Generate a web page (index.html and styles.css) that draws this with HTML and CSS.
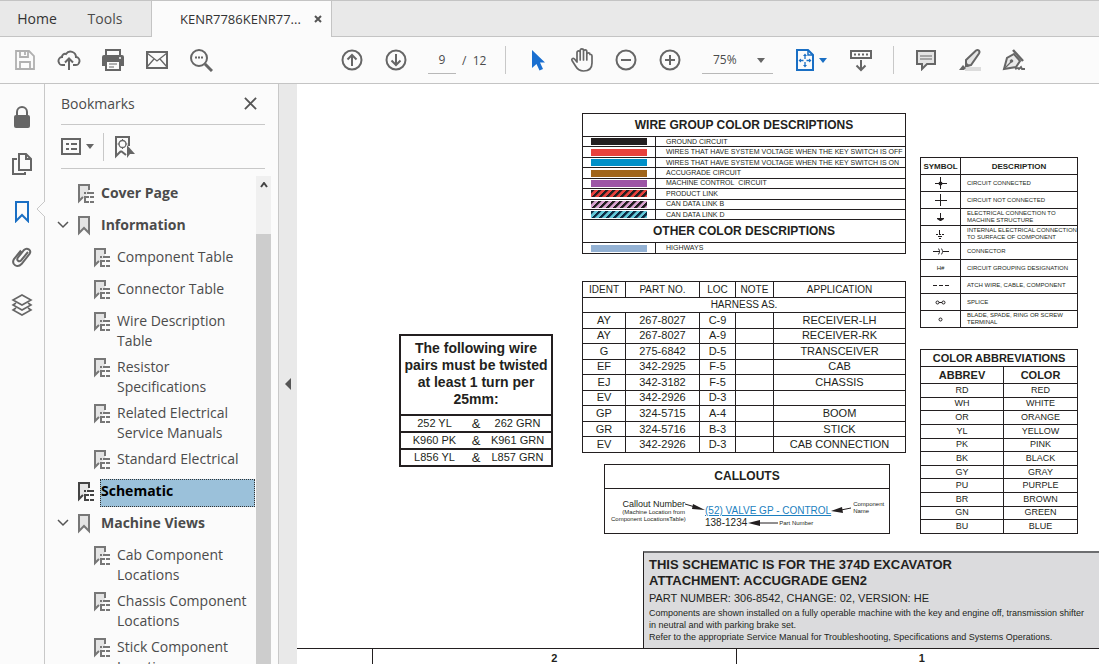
FILE: index.html
```html
<!DOCTYPE html>
<html lang="en">
<head>
  <meta charset="UTF-8">
  <meta name="viewport" content="width=device-width, initial-scale=1.0">
  <title>KENR7786KENR7786</title>
  <link rel="stylesheet" href="styles.css">
</head>
<body>

<!-- shared icons -->
<svg class="defs" aria-hidden="true">
  <symbol id="bm-tree" viewBox="0 0 16 20">
    <path d="M1 1h10v8l-5 4-5 5z" fill="#e4e4e4"/>
    <path d="M11 6V1H1v16l4-4" fill="none" stroke="currentColor" stroke-width="2"/>
    <path d="M6 9h2M9 9h7M7 12v6h4M7 13h4M12 13h4M12 18h4" fill="none" stroke="currentColor" stroke-width="2"/>
  </symbol>
  <symbol id="bm" viewBox="0 0 16 20">
    <path d="M1 1h10v16l-5-5-5 5z" fill="#e4e4e4" stroke="currentColor" stroke-width="2"/>
  </symbol>
  <symbol id="chev" viewBox="0 0 12 8">
    <path d="M1 1l5 5 5-5" fill="none" stroke="currentColor" stroke-width="1.5"/>
  </symbol>
  <symbol id="caret" viewBox="0 0 8 5">
    <path d="M0 0h8L4 5z" fill="currentColor"/>
  </symbol>
</svg>

<header class="tabs">
  <button type="button" class="tab home">Home</button>
  <button type="button" class="tab tools">Tools</button>
  <div class="tab-doc">
    <span>KENR7786KENR77...</span>
    <button type="button" class="tab-close" aria-label="Close tab">
      <svg width="8" height="8" viewBox="0 0 8 8"><path d="M1 1l6 6M7 1L1 7" stroke="#555" stroke-width="2"/></svg>
    </button>
  </div>
</header>

<div class="toolbar">
  <div class="group">
    <button type="button" class="tool off" aria-label="Save">
      <svg width="22" height="22" viewBox="0 0 22 22" fill="none" stroke="currentColor" stroke-width="1.8"><path d="M2 2h13l5 5v13H2z"/><path d="M6 2v6h8V2M6 20v-7h10v7M11 3v3"/></svg>
    </button>
    <button type="button" class="tool" aria-label="Upload">
      <svg width="24" height="24" viewBox="0 0 24 24" fill="none" stroke="currentColor" stroke-width="2"><path d="M8 17H6a4 4 0 0 1-1-8 3 3 0 0 1 4-3 5.500 5.500 0 0 1 10 3 4 4 0 0 1-1 8h-2"/><path d="M12 22V11M8 14.500l4-4 4 4"/></svg>
    </button>
    <button type="button" class="tool" aria-label="Print">
      <svg width="24" height="24" viewBox="0 0 24 24"><path d="M5 7V2h14v5" fill="none" stroke="currentColor" stroke-width="2"/><path d="M3 7h18a2 2 0 0 1 2 2v9h-4v-4H5v4H1V9a2 2 0 0 1 2-2z" fill="currentColor"/><path d="M5 14v8h14v-8" fill="none" stroke="currentColor" stroke-width="2"/><path d="M8 16h8M8 19h5" stroke="currentColor"/><path d="M18 10h2" stroke="#fff" stroke-width="1.500"/></svg>
    </button>
    <button type="button" class="tool" aria-label="Email">
      <svg width="24" height="20" viewBox="0 0 24 20" fill="none" stroke="currentColor"><path d="M2 2h20v16H2z" stroke-width="2"/><path d="M2 3l10 8 10-8M2 17l7-8M22 17l-7-8" stroke-width="1.300"/></svg>
    </button>
    <button type="button" class="tool" aria-label="Find">
      <svg width="24" height="24" viewBox="0 0 24 24" fill="none" stroke="currentColor"><circle cx="10" cy="10" r="8" stroke-width="2"/><path d="M16 16l7 7" stroke-width="3"/><path d="M6 9.500h2M9 9.500h2M12 9.500h2" stroke-width="2"/></svg>
    </button>
  </div>

  <div class="group pager">
    <button type="button" class="tool" aria-label="Previous page">
      <svg width="22" height="22" viewBox="0 0 22 22" fill="none" stroke="currentColor" stroke-width="2"><circle cx="11" cy="11" r="9.500"/><path d="M11 17V6M6.500 10.500L11 6l4.500 4.500"/></svg>
    </button>
    <button type="button" class="tool" aria-label="Next page">
      <svg width="22" height="22" viewBox="0 0 22 22" fill="none" stroke="currentColor" stroke-width="2"><circle cx="11" cy="11" r="9.500"/><path d="M11 5v11M6.500 11.500L11 16l4.500-4.500"/></svg>
    </button>
    <input type="text" class="page-input" value="9" aria-label="Page number">
    <span class="page-total">/&nbsp; 12</span>
  </div>
  <div class="sep"></div>

  <div class="group">
    <button type="button" class="tool" aria-label="Select">
      <svg width="22" height="24" viewBox="0 0 22 24"><path d="M5 2v18l4.500-4 3 6.500 3.500-1.500-3-6.500h5z" fill="#1a6fd0"/></svg>
    </button>
    <button type="button" class="tool" aria-label="Pan">
      <svg width="24" height="26" viewBox="0 0 24 26" fill="none" stroke="currentColor" stroke-width="1.700" stroke-linejoin="round"><path d="M7 15V5.500a1.600 1.600 0 0 1 3.200 0V13 3.500a1.600 1.600 0 0 1 3.300 0V13 4.500a1.600 1.600 0 0 1 3.300 0V13 7.500a1.600 1.600 0 0 1 3.200 0C20 7.500 22 7 22 9v7c0 5-3 8-8.500 8-4 0-6-1.500-8-5l-3.500-5.500c-.8-1.700 1-2.700 2.300-1.700z"/></svg>
    </button>
    <button type="button" class="tool" aria-label="Zoom out">
      <svg width="22" height="22" viewBox="0 0 22 22" fill="none" stroke="currentColor" stroke-width="2"><circle cx="11" cy="11" r="9.500"/><path d="M6 11h10"/></svg>
    </button>
    <button type="button" class="tool" aria-label="Zoom in">
      <svg width="22" height="22" viewBox="0 0 22 22" fill="none" stroke="currentColor" stroke-width="2"><circle cx="11" cy="11" r="9.500"/><path d="M6 11h10M11 6v10"/></svg>
    </button>
    <div class="zoom-box">
      <select class="zoom-select" aria-label="Zoom level"><option>75%</option></select>
      <svg class="zoom-caret" width="8" height="5"><use href="#caret"/></svg>
    </div>
    <button type="button" class="tool fit" aria-label="Fit page">
      <svg width="18" height="22" viewBox="0 0 18 22" fill="none" stroke="currentColor"><path d="M1 1h11l5 5v15H1z" stroke-width="2"/><path d="M12 1v5h5" stroke-width="1.500"/><path d="M9 6v4M9 13v4M3.500 11.500h4M10.500 11.500h4" stroke-width="1.300"/><path d="M9 4.500l2 2.500H7zM9 18.500L7 16h4zM2.500 11.500L5 9.500v4zM15.500 11.500L13 9.500v4z" fill="currentColor" stroke="none"/></svg>
      <svg width="8" height="5"><use href="#caret"/></svg>
    </button>
    <button type="button" class="tool" aria-label="Page scrolling">
      <svg width="24" height="24" viewBox="0 0 24 24" fill="none" stroke="currentColor" stroke-width="2"><path d="M2 3h20v7H2z"/><path d="M5 6.500h2M9 6.500h2M13 6.500h2M17 6.500h2M12 12v10M7.500 17.500L12 22l4.500-4.500"/></svg>
    </button>
  </div>
  <div class="sep"></div>

  <div class="group">
    <button type="button" class="tool" aria-label="Comment">
      <svg width="22" height="22" viewBox="0 0 22 22" stroke="currentColor"><path d="M2 2h18v13h-8l-5 5v-5H2z" fill="#e4e4e4" stroke-width="2"/><path d="M5 7h12M5 10h12"/></svg>
    </button>
    <button type="button" class="tool" aria-label="Highlight">
      <svg width="24" height="24" viewBox="0 0 24 24"><path d="M7 19h16v4H7z" fill="#dcdcdc"/><path d="M8 12L18 2.500c2-1.500 4.500.5 3 3L13 17l-5 1z" fill="#e4e4e4" stroke="currentColor" stroke-width="2"/><path d="M7 13l5 5-3 1-2-2zM5 17l3 3-2 2H1z" fill="currentColor"/></svg>
    </button>
    <button type="button" class="tool" aria-label="Sign">
      <svg width="24" height="24" viewBox="0 0 24 24" fill="none" stroke="currentColor"><path d="M2 21L5 10l7-4 6 7-4 6z" fill="#e9e9e9" stroke-width="2"/><path d="M11 2l10 11" stroke-width="2.500"/><path d="M2 21l7-7" stroke-width="1.300"/><circle cx="9.500" cy="13" r="1.300" fill="currentColor"/><path d="M13 21l3-1 1 1 2-2 1 2h3" stroke-width="1.800"/></svg>
    </button>
  </div>
</div>

<div class="main">
  <nav class="rail">
    <button type="button" aria-label="Security">
      <svg width="18" height="24" viewBox="0 0 18 24"><path d="M4 11V7a5 5 0 0 1 10 0v4" fill="none" stroke="currentColor" stroke-width="2"/><rect x="1" y="10" width="16" height="13" rx="2" fill="currentColor"/></svg>
    </button>
    <button type="button" aria-label="Pages">
      <svg width="20" height="24" viewBox="0 0 20 24" fill="none" stroke="currentColor" stroke-width="2"><path d="M7 2h7l5 5v11H7z"/><path d="M14 2v5h5M5 7H1v15h12v-2"/></svg>
    </button>
    <button type="button" class="on" aria-label="Bookmarks">
      <svg width="16" height="24" viewBox="0 0 16 24" fill="none" stroke="currentColor" stroke-width="2"><path d="M2 3h12v19l-6-6-6 6z"/></svg>
      <svg class="notch" width="9" height="16" viewBox="0 0 9 16"><path d="M9 0L1 8l8 8" fill="#fbfbfb" stroke="#c8c8c8"/></svg>
    </button>
    <button type="button" aria-label="Attachments">
      <svg width="22" height="24" viewBox="0 0 22 24" fill="none" stroke="currentColor" stroke-width="2"><path d="M17 6l-7 8.500c-2 2-5-.5-3-3L13 4c3-3 8 0 5.500 4l-8 10c-4 4.500-10.500.5-7.500-5L10 4.500"/></svg>
    </button>
    <button type="button" aria-label="Layers">
      <svg width="22" height="24" viewBox="0 0 22 24" fill="none" stroke="currentColor" stroke-width="1.600"><path d="M11 2l9 5-9 5-9-5z"/><path d="M5 10l-3 2 9 5 9-5-3-2M5 15l-3 2 9 5 9-5-3-2"/></svg>
    </button>
  </nav>

  <aside class="panel">
    <div class="panel-head">
      <h2>Bookmarks</h2>
      <button type="button" aria-label="Close panel">
        <svg width="13" height="13" viewBox="0 0 14 14"><path d="M1 1l12 12M13 1L1 13" stroke="#555" stroke-width="2"/></svg>
      </button>
    </div>
    <div class="panel-tools">
      <button type="button" class="opts" aria-label="Options">
        <svg width="20" height="18" viewBox="0 0 20 18" fill="none" stroke="currentColor" stroke-width="2"><path d="M1 1h18v15H1z"/><path d="M5 6h3M10 6h6M5 11h3M10 11h6"/></svg>
        <svg width="8" height="5"><use href="#caret"/></svg>
      </button>
      <button type="button" class="find" aria-label="Find current bookmark">
        <svg width="22" height="24" viewBox="0 0 22 24" fill="none" stroke="currentColor"><path d="M16 11V2H3v19l5-5" stroke-width="2"/><circle cx="9.500" cy="9" r="3.500" stroke-width="1.300"/><path d="M9.500 4v2M9.500 12v2M4.500 9h2M12.500 9h2"/><path d="M14 10v13l3-4h5z" fill="currentColor" stroke="none"/><path d="M8 16l5 4" stroke-width="2"/></svg>
      </button>
    </div>
    <div class="list-wrap">
      <ul class="bookmarks">
        <li><span class="tw"></span><svg class="ic"><use href="#bm-tree"/></svg><a href="#">Cover Page</a></li>
        <li><svg class="tw"><use href="#chev"/></svg><svg class="ic"><use href="#bm"/></svg><a href="#">Information</a></li>
        <li class="sub"><svg class="ic"><use href="#bm-tree"/></svg><a href="#">Component Table</a></li>
        <li class="sub"><svg class="ic"><use href="#bm-tree"/></svg><a href="#">Connector Table</a></li>
        <li class="sub"><svg class="ic"><use href="#bm-tree"/></svg><a href="#">Wire Description Table</a></li>
        <li class="sub"><svg class="ic"><use href="#bm-tree"/></svg><a href="#">Resistor Specifications</a></li>
        <li class="sub"><svg class="ic"><use href="#bm-tree"/></svg><a href="#">Related Electrical Service Manuals</a></li>
        <li class="sub"><svg class="ic"><use href="#bm-tree"/></svg><a href="#">Standard Electrical</a></li>
        <li class="selected"><span class="tw"></span><svg class="ic"><use href="#bm-tree"/></svg><a href="#">Schematic</a></li>
        <li><svg class="tw"><use href="#chev"/></svg><svg class="ic"><use href="#bm"/></svg><a href="#">Machine Views</a></li>
        <li class="sub"><svg class="ic"><use href="#bm-tree"/></svg><a href="#">Cab Component Locations</a></li>
        <li class="sub"><svg class="ic"><use href="#bm-tree"/></svg><a href="#">Chassis Component Locations</a></li>
        <li class="sub"><svg class="ic"><use href="#bm-tree"/></svg><a href="#">Stick Component Locations</a></li>
      </ul>
      <div class="scroll">
        <svg width="8" height="6" viewBox="0 0 8 6"><path d="M1 5l3-4 3 4" fill="none" stroke="#444" stroke-width="2"/></svg>
        <div class="thumb"></div>
      </div>
    </div>
  </aside>

  <button type="button" class="splitter" aria-label="Collapse panel">
    <svg width="6" height="12" viewBox="0 0 6 12"><path d="M6 0v12L0 6z" fill="#555"/></svg>
  </button>

  <main class="sheet">
    <div class="tables">
      <div class="col-pairs">
        <table class="pairs">
          <colgroup><col><col class="w-amp"><col></colgroup>
          <thead>
            <tr><th colspan="3">The following wire pairs must be twisted at least 1 turn per 25mm:</th></tr>
          </thead>
          <tbody>
            <tr><td>252 YL</td><td class="amp">&amp;</td><td>262 GRN</td></tr>
            <tr><td>K960 PK</td><td class="amp">&amp;</td><td>K961 GRN</td></tr>
            <tr><td>L856 YL</td><td class="amp">&amp;</td><td>L857 GRN</td></tr>
          </tbody>
        </table>
      </div>

      <div class="col-mid">
        <table class="wires">
          <colgroup><col class="w-swatch"><col></colgroup>
          <tr class="title"><th colspan="2">WIRE GROUP COLOR DESCRIPTIONS</th></tr>
          <tr><td><div class="swatch black"></div></td><td>GROUND CIRCUIT</td></tr>
          <tr><td><div class="swatch red"></div></td><td>WIRES THAT HAVE SYSTEM VOLTAGE WHEN THE KEY SWITCH IS OFF</td></tr>
          <tr><td><div class="swatch blue"></div></td><td>WIRES THAT HAVE SYSTEM VOLTAGE WHEN THE KEY SWITCH IS ON</td></tr>
          <tr><td><div class="swatch brown"></div></td><td>ACCUGRADE CIRCUIT</td></tr>
          <tr><td><div class="swatch purple"></div></td><td>MACHINE CONTROL&nbsp; CIRCUIT</td></tr>
          <tr><td><div class="swatch stripe-red"></div></td><td>PRODUCT LINK</td></tr>
          <tr><td><div class="swatch stripe-pink"></div></td><td>CAN DATA LINK B</td></tr>
          <tr><td><div class="swatch stripe-cyan"></div></td><td>CAN DATA LINK D</td></tr>
          <tr class="title"><th colspan="2">OTHER COLOR DESCRIPTIONS</th></tr>
          <tr><td><div class="swatch steel"></div></td><td>HIGHWAYS</td></tr>
        </table>

        <table class="harness">
          <colgroup><col class="w-ident"><col class="w-part"><col class="w-loc"><col class="w-note"><col></colgroup>
          <tr><th>IDENT</th><th>PART NO.</th><th>LOC</th><th>NOTE</th><th>APPLICATION</th></tr>
          <tr><th colspan="5">HARNESS AS.</th></tr>
          <tr><td>AY</td><td>267-8027</td><td>C-9</td><td></td><td>RECEIVER-LH</td></tr>
          <tr><td>AY</td><td>267-8027</td><td>A-9</td><td></td><td>RECEIVER-RK</td></tr>
          <tr><td>G</td><td>275-6842</td><td>D-5</td><td></td><td>TRANSCEIVER</td></tr>
          <tr><td>EF</td><td>342-2925</td><td>F-5</td><td></td><td>CAB</td></tr>
          <tr><td>EJ</td><td>342-3182</td><td>F-5</td><td></td><td>CHASSIS</td></tr>
          <tr><td>EV</td><td>342-2926</td><td>D-3</td><td></td><td></td></tr>
          <tr><td>GP</td><td>324-5715</td><td>A-4</td><td></td><td>BOOM</td></tr>
          <tr><td>GR</td><td>324-5716</td><td>B-3</td><td></td><td>STICK</td></tr>
          <tr><td>EV</td><td>342-2926</td><td>D-3</td><td></td><td>CAB CONNECTION</td></tr>
        </table>

        <section class="callouts">
          <h3>CALLOUTS</h3>
          <div class="callout-body">
            <div class="callout-num">
              <p>Callout Number</p>
              <small>(Machine Location from<br>Component LocationsTable)</small>
            </div>
            <svg class="arrow-in" width="20" height="12" viewBox="0 0 20 12"><path d="M0 3l10 3" stroke="#231f20"/><path d="M8 3l12 6L7 8z" fill="#231f20"/></svg>
            <div class="callout-main">
              <a href="#">(52) VALVE GP - CONTROL</a>
              <div class="part-row">
                <span>138-1234</span>
                <svg width="30" height="6" viewBox="0 0 30 6"><path d="M10 3h20" stroke="#231f20"/><path d="M0 3l12-3v6z" fill="#231f20"/></svg>
                <small>Part Number</small>
              </div>
            </div>
            <svg class="arrow-out" width="20" height="8" viewBox="0 0 20 8"><path d="M10 4l10-2" stroke="#231f20"/><path d="M0 5l11-4 1 6z" fill="#231f20"/></svg>
            <small class="callout-name">Component<br>Name</small>
          </div>
        </section>
      </div>

      <div class="col-right">
        <table class="symbols">
          <colgroup><col class="w-symbol"><col></colgroup>
          <tr><th>SYMBOL</th><th>DESCRIPTION</th></tr>
          <tr><td><svg width="12" height="12" viewBox="0 0 12 12"><path d="M0 6.500h12M5.500 0v12" stroke="#231f20"/><circle cx="5.500" cy="6.500" r="2" fill="#231f20"/></svg></td><td>CIRCUIT CONNECTED</td></tr>
          <tr><td><svg width="12" height="12" viewBox="0 0 12 12"><path d="M0 6.500h12M5.500 0v12" stroke="#231f20"/></svg></td><td>CIRCUIT NOT CONNECTED</td></tr>
          <tr><td><svg width="8" height="9" viewBox="0 0 8 9"><path d="M3.500 0v6" stroke="#231f20"/><path d="M0 5h7v1L4 8H3L0 6z" fill="#231f20"/></svg></td><td>ELECTRICAL CONNECTION TO MACHINE STRUCTURE</td></tr>
          <tr><td><svg width="9" height="9" viewBox="0 0 9 9"><path d="M3.500 0v5M0 4.500h2M3 4.500h2M6 4.500h2M2 6.500h4M3 8.500h2" stroke="#231f20"/></svg></td><td>INTERNAL ELECTRICAL CONNECTION TO SURFACE OF COMPONENT</td></tr>
          <tr><td><svg width="16" height="7" viewBox="0 0 16 7" fill="none" stroke="#231f20"><path d="M0 3.500h7M10 3.500h6M5 .5c2 1 2 5 0 6M8 .5c2 1 2 5 0 6"/></svg></td><td>CONNECTOR</td></tr>
          <tr><td class="hash">H#</td><td>CIRCUIT GROUPING DESIGNATION</td></tr>
          <tr><td><svg width="16" height="3" viewBox="0 0 16 3"><path d="M0 1.500h4M6 1.500h4M12 1.500h4" stroke="#231f20"/></svg></td><td>ATCH WIRE, CABLE, COMPONENT</td></tr>
          <tr><td><svg width="11" height="5" viewBox="0 0 11 5" fill="none" stroke="#231f20"><circle cx="2.500" cy="2.500" r="1.500"/><circle cx="8.500" cy="2.500" r="1.500"/><path d="M4 2.500h3"/></svg></td><td>SPLICE</td></tr>
          <tr><td><svg width="5" height="5" viewBox="0 0 5 5" fill="none" stroke="#231f20"><circle cx="2.500" cy="2.500" r="1.500"/></svg></td><td>BLADE, SPADE, RING OR SCREW TERMINAL</td></tr>
        </table>

        <table class="abbrevs">
          <colgroup><col class="w-abbrev"><col></colgroup>
          <tr><th colspan="2">COLOR ABBREVIATIONS</th></tr>
          <tr><th>ABBREV</th><th>COLOR</th></tr>
          <tr><td>RD</td><td>RED</td></tr>
          <tr><td>WH</td><td>WHITE</td></tr>
          <tr><td>OR</td><td>ORANGE</td></tr>
          <tr><td>YL</td><td>YELLOW</td></tr>
          <tr><td>PK</td><td>PINK</td></tr>
          <tr><td>BK</td><td>BLACK</td></tr>
          <tr><td>GY</td><td>GRAY</td></tr>
          <tr><td>PU</td><td>PURPLE</td></tr>
          <tr><td>BR</td><td>BROWN</td></tr>
          <tr><td>GN</td><td>GREEN</td></tr>
          <tr><td>BU</td><td>BLUE</td></tr>
        </table>
      </div>
    </div>

    <section class="note">
      <h3>THIS SCHEMATIC IS FOR THE 374D EXCAVATOR<br>ATTACHMENT: ACCUGRADE GEN2</h3>
      <p class="part">PART NUMBER: 306-8542, CHANGE: 02, VERSION: HE</p>
      <p>Components are shown installed on a fully operable machine with the key and engine off, transmission shifter<br>in neutral and with parking brake set.<br>Refer to the appropriate Service Manual for Troubleshooting, Specifications and Systems Operations.</p>
    </section>

    <div class="zones">
      <div></div>
      <div>2</div>
      <div>1</div>
    </div>
  </main>
</div>

</body>
</html>
```
FILE: styles.css
```css
* {
  box-sizing: border-box;
}

body {
  margin: 0;
  height: 100vh;
  display: flex;
  flex-direction: column;
  overflow: hidden;
  background: #fbfbfb;
  color: #4b4b4b;
  font-family: "Open Sans", "Noto Sans", sans-serif;
  font-size: 14px;
}

button {
  padding: 0;
  border: none;
  background: none;
  color: inherit;
  font: inherit;
  cursor: pointer;
}

h2, h3, p, ul {
  margin: 0;
  padding: 0;
}

svg {
  display: block;
  flex: none;
}

.defs {
  position: absolute;
  width: 0;
  height: 0;
}

/* tab strip */
.tabs {
  display: flex;
  flex: none;
  height: 37px;
  background: #e9e9e9;
  border-top: 1px solid #c4c4c4;
  border-bottom: 1px solid #c4c4c4;
}

.tab {
  color: #333;
}

.home {
  width: 74px;
}

.tools {
  width: 62px;
  margin-right: 15px;
  color: #4b4b4b;
}

.tab-doc {
  display: flex;
  align-items: center;
  gap: 13px;
  width: 181px;
  height: 36px;
  padding-left: 28px;
  background: #fbfbfb;
  border-left: 1px solid #c4c4c4;
  border-right: 1px solid #c4c4c4;
  color: #333;
  font-size: 13px;
}

/* toolbar */
.toolbar {
  display: flex;
  flex: none;
  align-items: center;
  height: 47px;
  padding-left: 3px;
  border-bottom: 1px solid #c4c4c4;
  color: #666;
}

.group {
  display: flex;
  align-items: center;
}

.pager {
  margin-left: 107px;
}

.tool {
  display: flex;
  align-items: center;
  justify-content: center;
  width: 44px;
  height: 44px;
}

.off {
  color: #b0b0b0;
}

.page-input {
  width: 28px;
  height: 28px;
  margin-left: 10px;
  padding: 0;
  border: none;
  border-bottom: 1px solid #b8b8b8;
  background: none;
  color: #4b4b4b;
  font: 12px "Open Sans", sans-serif;
  text-align: center;
}

.page-total {
  width: 40px;
  margin-left: 6px;
  color: #4b4b4b;
  font-size: 12px;
}

.sep {
  width: 1px;
  height: 28px;
  margin: 0 10px;
  background: #c8c8c8;
}

.pager + .sep {
  margin-left: 3px;
}

.zoom-box {
  position: relative;
  margin: 0 10px;
}

.zoom-select {
  display: block;
  width: 71px;
  height: 28px;
  padding: 0 0 0 11px;
  border: none;
  border-bottom: 1px solid #b8b8b8;
  border-radius: 0;
  background: none;
  color: #4b4b4b;
  font: 12px "Open Sans", sans-serif;
  appearance: none;
}

.zoom-caret {
  position: absolute;
  top: 12px;
  right: 8px;
  pointer-events: none;
}

.fit {
  width: 56px;
  gap: 5px;
  color: #1a6fc4;
}

/* left side */
.main {
  display: flex;
  flex: 1;
  min-height: 0;
}

.rail {
  display: flex;
  flex: none;
  flex-direction: column;
  width: 45px;
  padding-top: 9px;
  border-right: 1px solid #c8c8c8;
  color: #666;
}

.rail button {
  display: flex;
  align-items: center;
  justify-content: center;
  position: relative;
  height: 47px;
}

.rail .on {
  color: #1a6fc4;
}

.notch {
  position: absolute;
  top: 14px;
  right: -1px;
}

.panel {
  display: flex;
  flex: none;
  flex-direction: column;
  width: 234px;
  border-right: 1px solid #c8c8c8;
}

.panel-head {
  display: flex;
  align-items: center;
  justify-content: space-between;
  height: 41px;
  margin: 0 13px 0 16px;
  padding: 0 8px 2px 0;
  border-bottom: 1px solid #c8c8c8;
}

.panel-head h2 {
  font-size: 14px;
  font-weight: normal;
}

.panel-tools {
  display: flex;
  align-items: center;
  height: 44px;
  margin: 0 13px 0 16px;
  border-bottom: 1px solid #c8c8c8;
  color: #666;
}

.opts {
  display: flex;
  align-items: center;
  gap: 5px;
  width: 43px;
  height: 28px;
  border-right: 1px solid #c8c8c8;
}

.find {
  margin-left: 9px;
}

.list-wrap {
  display: flex;
  flex: 1;
  min-height: 0;
  margin-top: 7px;
}

.bookmarks {
  flex: 1;
  padding-top: 5px;
  overflow: hidden;
  list-style: none;
}

.bookmarks li {
  display: flex;
  align-items: flex-start;
  min-height: 32px;
  padding-left: 12px;
  color: #777;
}

.bookmarks .sub {
  padding-left: 49px;
}

.bookmarks a {
  flex: 1;
  min-height: 28px;
  padding: 2px 0 4px 1px;
  color: #4b4b4b;
  font-weight: bold;
  line-height: 20px;
  text-decoration: none;
}

.bookmarks .sub a {
  font-weight: normal;
}

.tw {
  width: 12px;
  height: 8px;
  margin: 8px 9px 0 0;
  color: #555;
}

.ic {
  width: 16px;
  height: 20px;
  margin: 3px 6px 0 0;
}

.bookmarks .selected {
  color: #444;
}

.bookmarks .selected a {
  background: #9bc1da;
  color: #000;
  outline: 1px dotted #333;
  outline-offset: -1px;
}

.scroll {
  display: flex;
  flex-direction: column;
  align-items: center;
  width: 15px;
  margin: 0 7px 0 1px;
  padding-top: 6px;
  background: #f0f0f0;
}

.thumb {
  flex: 1;
  width: 100%;
  margin-top: 46px;
  background: #cdcdcd;
}

.splitter {
  display: flex;
  flex: none;
  align-items: center;
  justify-content: center;
  width: 18px;
  background: #e9e9e9;
}

.splitter svg {
  margin-top: 20px;
}

/* document page */
.sheet {
  display: flex;
  flex: 1;
  flex-direction: column;
  min-width: 0;
  padding-top: 29px;
  background: #fff;
  color: #231f20;
  font-family: "Liberation Sans", Arial, sans-serif;
  font-size: 11px;
}

.tables {
  display: grid;
  flex: none;
  grid-template-columns: 154px 324px 158px;
  justify-content: end;
  column-gap: 14px;
  padding-right: 21px;
}

.tables .col-pairs {
  padding-top: 221px;
  margin: 0 15px 0 -15px;
}

.col-mid {
  display: flex;
  flex-direction: column;
}

.col-right {
  display: flex;
  flex-direction: column;
  gap: 21px;
  padding-top: 44px;
}

.sheet table {
  width: 100%;
  border-collapse: collapse;
  table-layout: fixed;
}

.sheet th,
.sheet td {
  padding: 0;
  border: 1px solid #231f20;
  text-align: center;
}

.sheet .pairs {
  border: 2px solid #231f20;
}

.sheet .pairs th {
  height: 80px;
  padding-bottom: 3px;
  border: 2px solid #231f20;
  font-size: 14px;
  line-height: 17px;
}

.sheet .pairs td {
  height: 17px;
  border-width: 2px 0;
  line-height: 13px;
  white-space: nowrap;
}

.sheet .pairs .amp {
  font-size: 13px;
}

.w-amp {
  width: 16px;
}

.wires {
  height: 141px;
  font-size: 7px;
  line-height: 8px;
}

.w-swatch {
  width: 73px;
}

.wires .title th {
  height: 22px;
  font-size: 12px;
  line-height: 14px;
}

.sheet .wires td {
  height: 10px;
  text-align: left;
  white-space: nowrap;
}

.sheet .wires td + td {
  padding-left: 10px;
}

.swatch {
  width: 56px;
  height: 7px;
  margin: 0 auto;
}

.black { background: #231f20; }
.red { background: #e8413c; }
.blue { background: #0090c8; }
.brown { background: #a0651a; }
.purple { background: #9c55a5; }
.steel { background: #93b1d3; }

.stripe-red {
  background: repeating-linear-gradient(135deg, #231f20 0 2px, #e8413c 3px 5px);
}

.stripe-pink {
  background: repeating-linear-gradient(135deg, #231f20 0 2px, #d9a3cf 3px 5px);
}

.stripe-cyan {
  background: repeating-linear-gradient(135deg, #0d2c44 0 2px, #62c8d8 3px 5px);
}

.harness {
  height: 172px;
  margin-top: 27px;
  font-size: 11px;
  line-height: 13px;
}

.harness th {
  font-size: 10px;
  font-weight: normal;
}

.w-ident { width: 43px; }
.w-part { width: 74px; }
.w-loc { width: 36px; }
.w-note { width: 38px; }

.callouts {
  margin: 11px 16px 0 22px;
  border: 1px solid #231f20;
}

.callouts h3 {
  height: 24px;
  border-bottom: 1px solid #231f20;
  font-size: 12px;
  line-height: 22px;
  text-align: center;
}

.callout-body {
  display: flex;
  height: 44px;
  padding: 10px 2px 0 6px;
}

.callouts small {
  font-size: 6px;
  line-height: 7px;
}

.callout-num {
  width: 74px;
  font-size: 9px;
  line-height: 10px;
  text-align: right;
  white-space: nowrap;
}

.callout-num small {
  display: block;
}

.arrow-in {
  margin-top: 2px;
}

.callout-main {
  padding-top: 6px;
  font-size: 10px;
  line-height: 12px;
  white-space: nowrap;
}

.callout-main a {
  color: #1c7fc0;
}

.part-row {
  display: flex;
  align-items: center;
  gap: 1px;
}

.arrow-out {
  margin-top: 7px;
}

.callout-name {
  padding: 2px 0 0 2px;
}

.symbols {
  height: 170px;
  font-size: 6px;
  line-height: 7px;
}

.symbols tr {
  height: 17px;
}

.w-symbol {
  width: 40px;
}

.symbols th {
  font-size: 8px;
}

.symbols svg {
  margin: 0 auto;
}

.sheet .symbols td + td {
  padding-left: 6px;
  text-align: left;
}

.abbrevs {
  height: 185px;
  font-size: 9px;
  line-height: 11px;
}

.w-abbrev {
  width: 83px;
}

.abbrevs th {
  height: 17px;
  font-size: 11px;
}

.note {
  flex: none;
  height: 97px;
  margin: 17px 0 0 346px;
  padding: 4px 0 0 5px;
  background: #dbdbdd;
  border-top: 2px solid #6d6e70;
  border-left: 1px solid #231f20;
  font-size: 9px;
  line-height: 12px;
  white-space: nowrap;
}

.note h3 {
  font-size: 13px;
  line-height: 16px;
}

.note .part {
  font-size: 11px;
  line-height: 18px;
}

.zones {
  display: grid;
  grid-template-columns: 75px 1fr 1fr;
  flex: 1;
  min-height: 0;
  border-top: 1px solid #231f20;
  font-weight: bold;
  line-height: 18px;
  text-align: center;
}

.zones div + div {
  border-left: 1px solid #231f20;
}

.zones div:last-child {
  padding-left: 8px;
}
```
